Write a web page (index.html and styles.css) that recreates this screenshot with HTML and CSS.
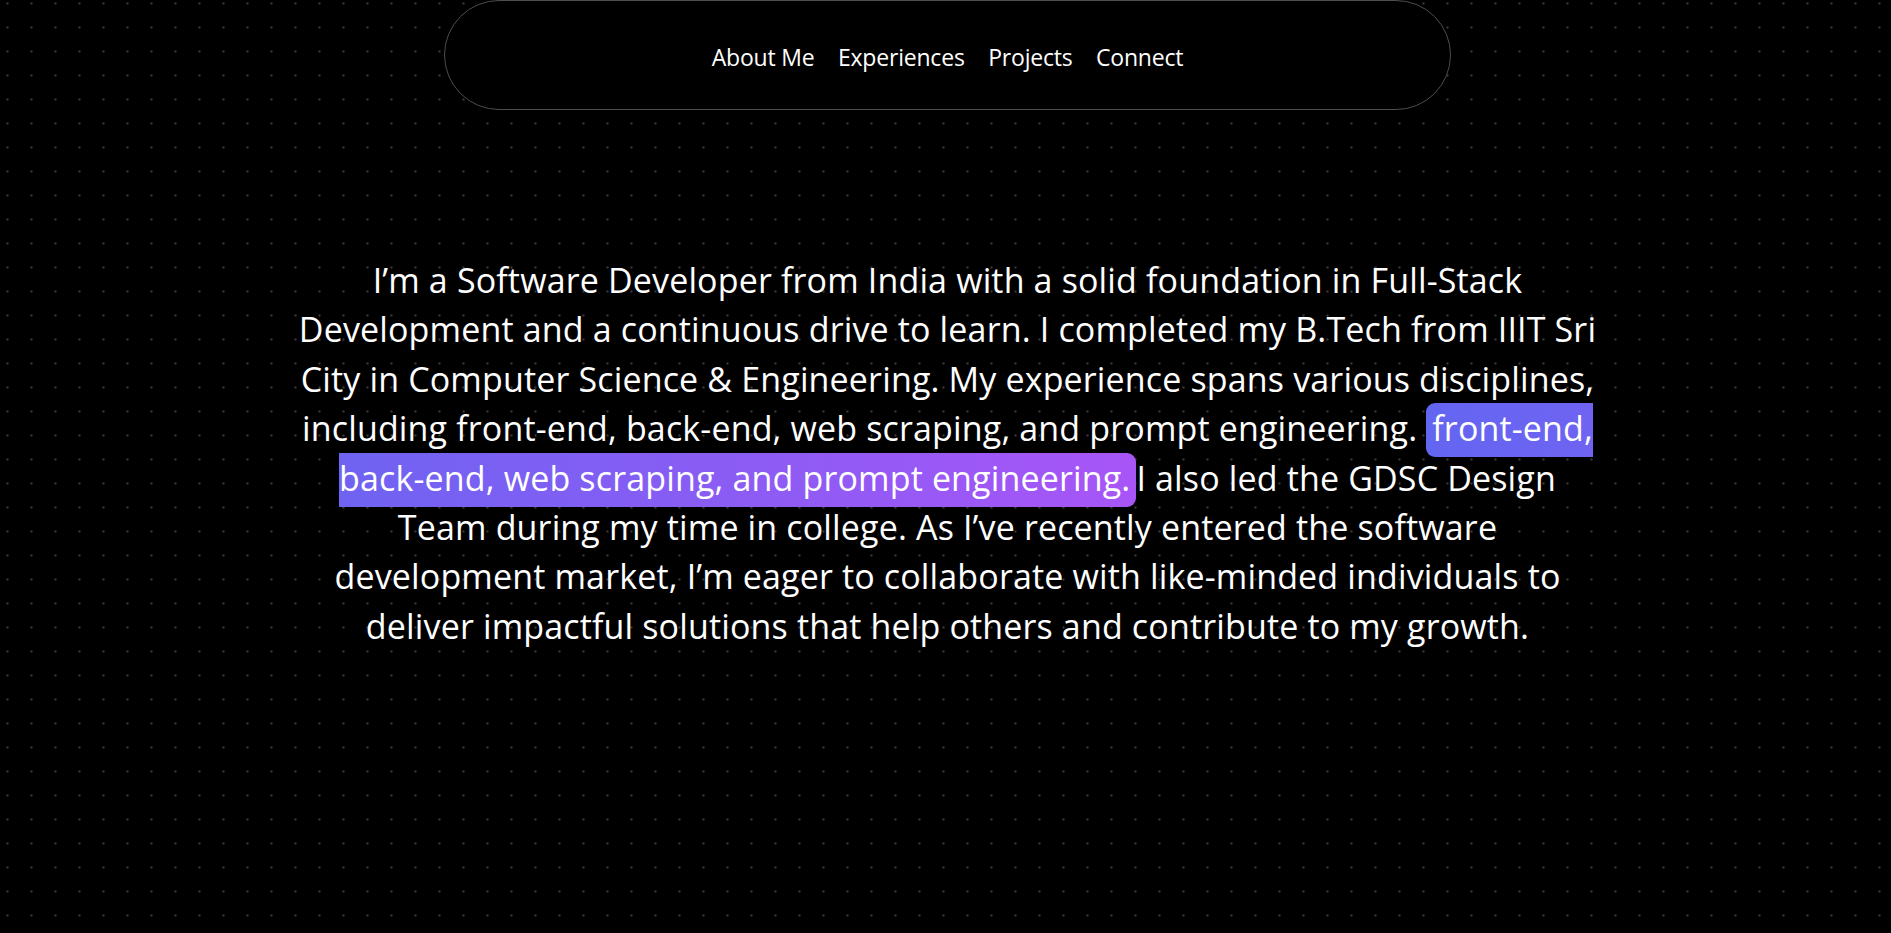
FILE: index.html
```html
<!DOCTYPE html>
<html lang="en">
<head>
<meta charset="utf-8">
<title>Portfolio</title>
<link rel="stylesheet" href="styles.css">
</head>
<body>
<div class="page">
  <header class="topbar">
    <nav class="pill">
      <a class="nav-link" href="#about">About Me</a>
      <a class="nav-link" href="#experiences">Experiences</a>
      <a class="nav-link" href="#projects">Projects</a>
      <a class="nav-link" href="#connect">Connect</a>
    </nav>
  </header>
  <main class="about" id="about">
    <p class="intro">I’m a Software Developer from India with a solid foundation in Full-Stack<br>Development and a continuous drive to learn. I completed my B.Tech from IIIT Sri<br>City in Computer Science &amp; Engineering. My experience spans various disciplines,<br>including front-end, back-end, web scraping, and prompt engineering. <span class="hl">front-end,<br>back-end, web scraping, and prompt engineering.</span>I also led the GDSC Design<br>Team during my time in college. As I’ve recently entered the software<br>development market, I’m eager to collaborate with like-minded individuals to<br>deliver impactful solutions that help others and contribute to my growth.</p>
  </main>
</div>
</body>
</html>
```
FILE: styles.css
```css
html, body {
  margin: 0;
  padding: 0;
}
body {
  background-color: #000;
  background-image: radial-gradient(circle at center, #3d3d3d 0, #3d3d3d 1.1px, rgba(0,0,0,0) 1.6px);
  background-size: 24px 24px;
  background-position: -4.5px -8.5px;
  min-height: 100vh;
  color: #fff;
  font-family: "Open Sans", "Noto Sans", sans-serif;
}
.page {
  padding-left: 4px;
  min-height: 933px;
  box-sizing: border-box;
}
.topbar {
  display: flex;
  justify-content: center;
}
.pill {
  width: 1007px;
  height: 110px;
  box-sizing: border-box;
  border: 1px solid #4d4d4d;
  border-radius: 55px;
  background: #000;
  display: flex;
  align-items: center;
  justify-content: center;
  gap: 23.5px;
  padding-top: 3px;
}
.nav-link {
  color: #fff;
  text-decoration: none;
  font-size: 23px;
  letter-spacing: -0.2px;
}
.about {
  display: flex;
  justify-content: center;
  padding-top: 146px;
}
.intro {
  margin: 0;
  width: 1360px;
  text-align: center;
  font-size: 34px;
  line-height: 49.4px;
  letter-spacing: 0.15px;
}
.hl {
  background-image: linear-gradient(to right, #6366f1, #a855f7);
  border-radius: 9px;
  padding: 2px 6px 6px 6px;
}
```
